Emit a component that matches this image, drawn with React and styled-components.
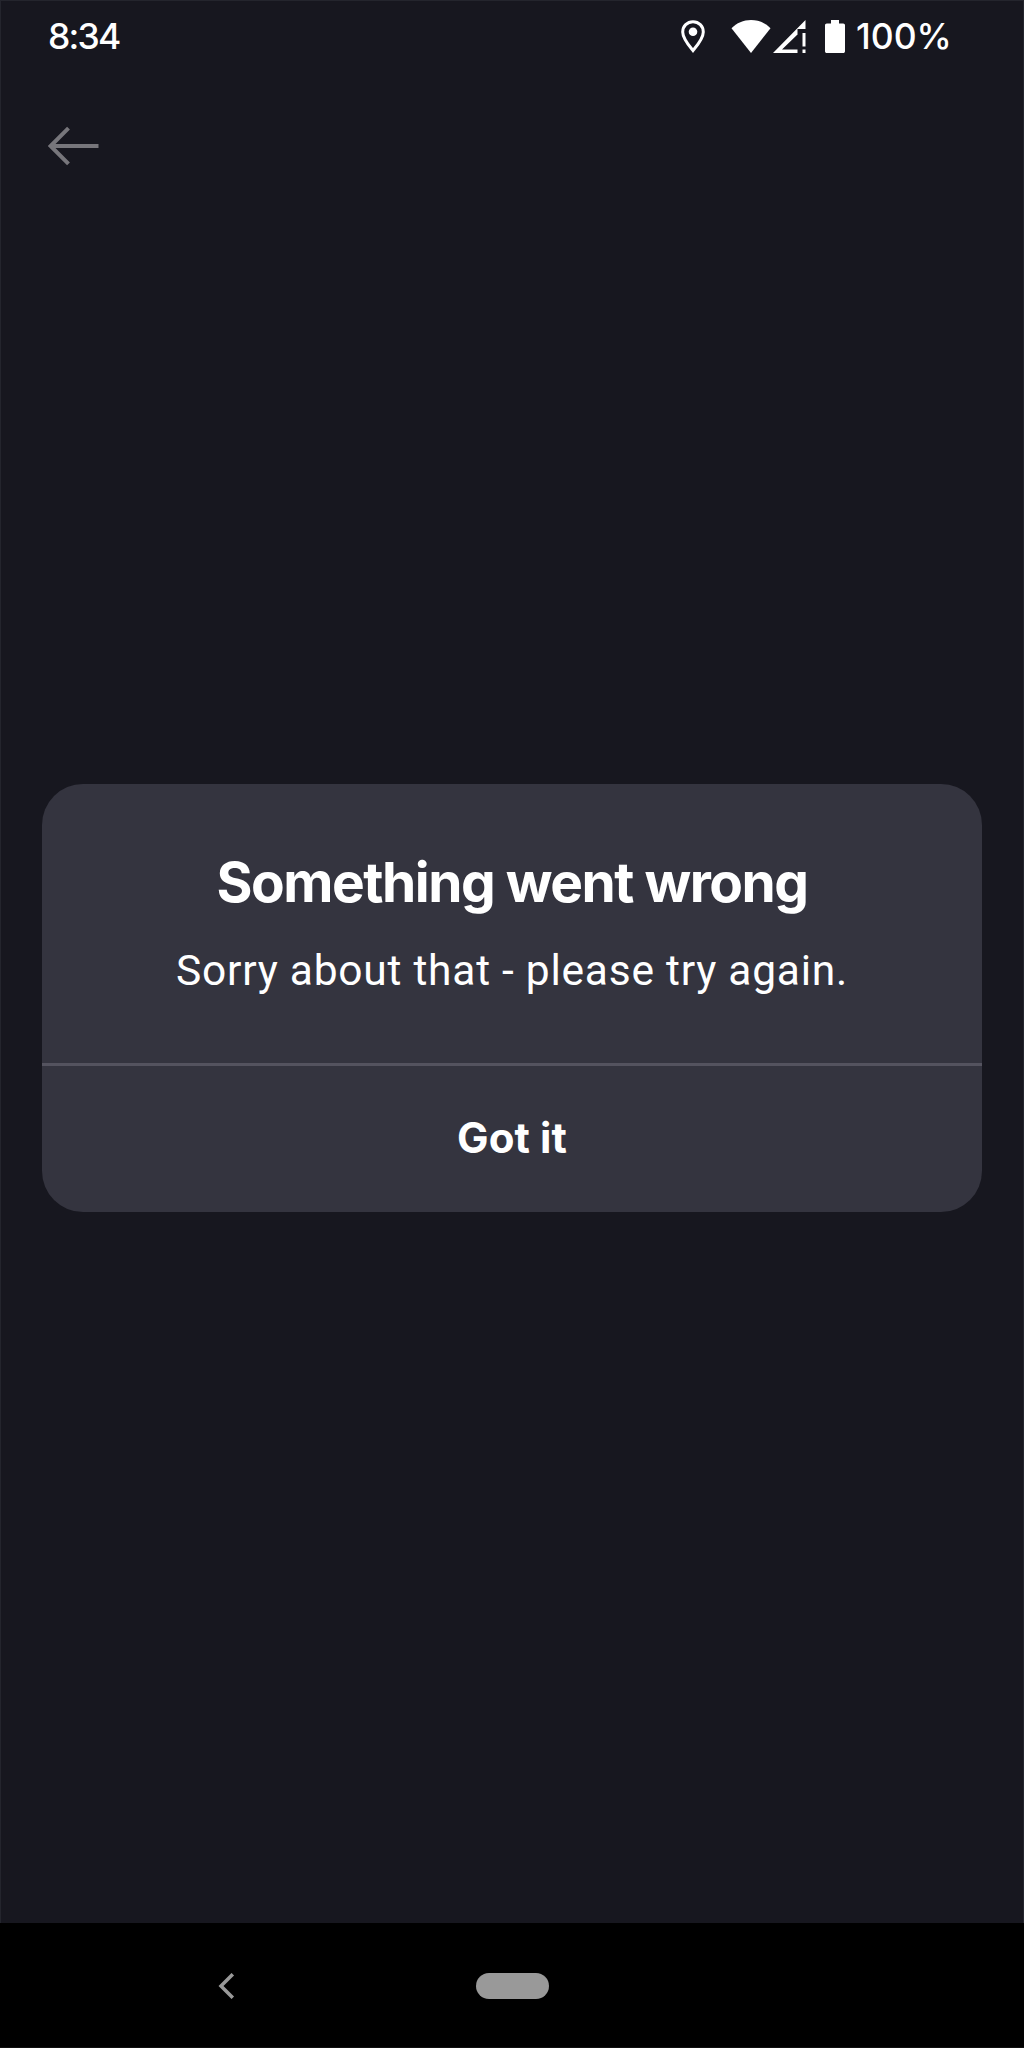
import React from "react";
import styled, { createGlobalStyle } from "styled-components";

const GlobalStyle = createGlobalStyle`
  * { box-sizing: border-box; }
  body { margin: 0; background: #17171f; }
`;

const Screen = styled.div`
  width: 1024px;
  height: 2048px;
  display: flex;
  flex-direction: column;
  background: #17171f;
  color: #fff;
  font-family: Inter, sans-serif;
  box-shadow: inset 0 0 0 1px #24252d;
  overflow: hidden;
`;

const StatusBar = styled.header`
  height: 74px;
  padding: 0 0 0 48px;
  display: flex;
  justify-content: space-between;
`;

const StatusText = styled.span`
  padding-top: 15px;
  font-size: 35.5px;
  font-weight: 500;
  line-height: 44px;
  letter-spacing: ${(p) => p.$spacing || "0"};
  white-space: nowrap;
`;

const StatusIcons = styled.div`
  width: 343px;
  display: flex;
`;

const StatusIcon = styled.svg`
  display: block;
  flex: none;
  height: 33px;
  margin: 20px ${(p) => p.$gap}px 0 0;
`;

const TopBar = styled.nav`
  padding: 52px 0 0 47px;
`;

const BackButton = styled.button`
  display: block;
  padding: 0;
  border: 0;
  background: none;
`;

const BackArrow = styled.svg`
  display: block;
`;

const Content = styled.main`
  flex: 1;
  padding: 618px 42px 0;
`;

const Dialog = styled.section`
  height: 428px;
  display: flex;
  flex-direction: column;
  border-radius: 41px;
  background: #34343f;
  text-align: center;
  white-space: nowrap;
`;

const Message = styled.div`
  height: 279px;
  padding-top: 64px;
`;

const Title = styled.h1`
  margin: 0;
  font-size: 55px;
  font-weight: 700;
  line-height: 68px;
  letter-spacing: -1.5px;
`;

const Description = styled.p`
  margin: 29px 0 0;
  font-family: Roboto, sans-serif;
  font-size: 42.5px;
  font-weight: 400;
  line-height: 52px;
  letter-spacing: 0.75px;
`;

const Confirm = styled.button`
  flex: 1;
  padding: 0 0 2px;
  border: 0;
  border-top: 3px solid #54535f;
  background: none;
  color: inherit;
  font: 700 42px/52px Inter, sans-serif;
  letter-spacing: 0.1px;
`;

const NavigationBar = styled.footer`
  height: 125px;
  padding: 50px 0 0 217px;
  display: flex;
  gap: 241px;
  background: #000;
  box-shadow: inset 0 -1px #101010;
`;

const HomePill = styled.div`
  width: 73px;
  height: 26px;
  border-radius: 13px;
  background: #999;
`;

export default function App() {
  return (
    <>
      <GlobalStyle />
      <Screen>
        <StatusBar>
          <StatusText $spacing="-1.8px">8:34</StatusText>
          <StatusIcons>
            <StatusIcon width="24" viewBox="0 0 24 33" $gap={26} fill="none">
              <path d="M12 1.7C6.2 1.7 1.7 6.2 1.7 12c0 6.6 6.1 13.5 10.3 18.600C16.200 25.500 22.300 18.600 22.300 12 22.300 6.200 17.800 1.700 12 1.700Z" stroke="#fff" strokeWidth="3" />
              <circle cx="12" cy="11.800" r="4.300" fill="#fff" />
            </StatusIcon>
            <StatusIcon width="40" viewBox="0 0 40 33" $gap={2} fill="#fff">
              <path d="M.5 8.300C5.500 3 12.500 0 20 0s14.500 3 19.500 8.300L20 33Z" />
            </StatusIcon>
            <StatusIcon width="33" viewBox="0 0 33 33" $gap={19} fill="#fff">
              <path fillRule="evenodd" d="M32.500 0V9H24.500V33H0ZM24.500 14.500 9 29.500H24.500Z" />
              <path d="M29.500 13h3v13.500h-3ZM29.500 29.500h3V33h-3Z" />
            </StatusIcon>
            <StatusIcon width="20" viewBox="0 0 20 33" $gap={11} fill="#fff">
              <path d="M6 0h8v3.500h4.200c1 0 1.800.8 1.800 1.800v26c0 1-.8 1.800-1.800 1.800H1.800C.8 33.100 0 32.300 0 31.300v-26c0-1 .8-1.800 1.800-1.800H6Z" />
            </StatusIcon>
            <StatusText>100%</StatusText>
          </StatusIcons>
        </StatusBar>
        <TopBar>
          <BackButton aria-label="Back">
            <BackArrow width="52" height="40" viewBox="0 0 52 40" fill="none" stroke="#77767b" strokeWidth="4">
              <path d="M21.500 2.200 3.600 20 21.500 37.800M3.600 20H51.500" />
            </BackArrow>
          </BackButton>
        </TopBar>
        <Content>
          <Dialog role="alertdialog">
            <Message>
              <Title>Something went wrong</Title>
              <Description>Sorry about that - please try again.</Description>
            </Message>
            <Confirm>Got it</Confirm>
          </Dialog>
        </Content>
        <NavigationBar>
          <svg width="18" height="26" viewBox="0 0 18 26" fill="none" stroke="#999" strokeWidth="3.500">
            <path d="M15.800 1.200 4 13l11.800 11.800" />
          </svg>
          <HomePill />
        </NavigationBar>
      </Screen>
    </>
  );
}
